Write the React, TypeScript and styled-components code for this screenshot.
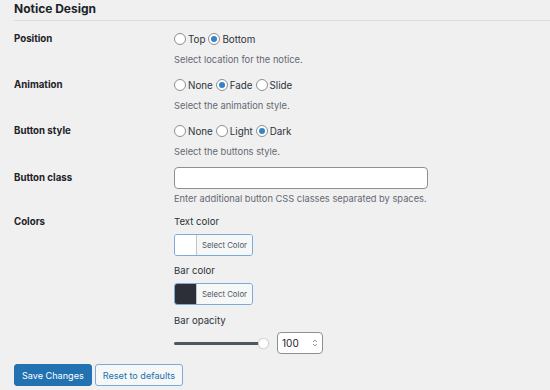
import React from "react";
import styled, { createGlobalStyle } from "styled-components";

const Global = createGlobalStyle`
  html, body { margin: 0; padding: 0; background: #f0f0f1; }
  body { font-family: Inter, "Noto Sans", sans-serif; color: #1d2327; }
  * { box-sizing: border-box; }
`;

const Page = styled.div`
  width: 550px;
  height: 390px;
  overflow: hidden;
  padding-left: 14px;
`;

const Title = styled.h2`
  margin: 0;
  font-size: 12px;
  line-height: 18px;
  font-weight: 700;
  padding-bottom: 2px;
  border-bottom: 1px solid #dcdcde;
  color: #1d2327;
`;

const Form = styled.div`
  display: flex;
  flex-direction: column;
  gap: 8px;
  padding-top: 8px;
`;

const Row = styled.div`
  display: grid;
  grid-template-columns: 160px 1fr;
`;

const Label = styled.div<{ $lh: number }>`
  font-size: 9.7px;
  font-weight: 700;
  line-height: ${(p) => p.$lh}px;
  color: #1d2327;
`;

const Field = styled.div`
  display: flex;
  flex-direction: column;
  align-items: flex-start;
`;

const RadioLine = styled.div`
  display: flex;
  align-items: center;
  height: 20px;
`;

const RadioItem = styled.label`
  display: inline-flex;
  align-items: center;
  margin-right: 3px;
  font-size: 9.8px;
  color: #2c3338;
`;

const Circle = styled.span<{ $checked?: boolean }>`
  width: 12px;
  height: 12px;
  border-radius: 50%;
  border: 1px solid #8c8f94;
  background: #fff;
  margin-right: 2px;
  display: inline-flex;
  align-items: center;
  justify-content: center;
  &::after {
    content: "";
    width: 6px;
    height: 6px;
    border-radius: 50%;
    background: ${(p) => (p.$checked ? "#3582c4" : "transparent")};
  }
`;

const Desc = styled.div<{ $mt: number }>`
  margin-top: ${(p) => p.$mt}px;
  font-size: 9.3px;
  line-height: 14px;
  color: #646970;
`;

const TextInput = styled.div`
  width: 254px;
  height: 22px;
  background: #fff;
  border: 1px solid #8c8f94;
  border-radius: 4px;
`;

const SubLabel = styled.div<{ $mt?: number }>`
  margin-top: ${(p) => p.$mt ?? 0}px;
  font-size: 9.6px;
  line-height: 16px;
  color: #2c3338;
`;

const ColorButton = styled.div`
  margin-top: 4px;
  display: flex;
  width: 79px;
  height: 22px;
  border: 1px solid #7ea9d8;
  border-radius: 3px;
  overflow: hidden;
`;

const Swatch = styled.span<{ $color: string }>`
  width: 22px;
  background: ${(p) => p.$color};
  border-right: 1px solid #c3c4c7;
`;

const SwatchText = styled.span`
  flex: 1;
  display: flex;
  align-items: center;
  justify-content: center;
  background: #f6f7f7;
  font-size: 7.8px;
  color: #50575e;
`;

const SliderRow = styled.div`
  margin-top: 3px;
  display: flex;
  align-items: center;
  height: 22px;
`;

const Range = styled.input`
  -webkit-appearance: none;
  appearance: none;
  width: 95px;
  height: 12px;
  margin: 0 8px 0 0;
  background: transparent;
  &::-webkit-slider-runnable-track {
    height: 3px;
    background: #50575e;
    border-radius: 2px;
  }
  &::-webkit-slider-thumb {
    -webkit-appearance: none;
    width: 11px;
    height: 11px;
    margin-top: -4px;
    border-radius: 50%;
    background: #fff;
    border: 1px solid #dcdcde;
    box-shadow: 0 0 1px rgba(0, 0, 0, 0.2);
  }
`;

const NumberBox = styled.div`
  width: 46px;
  height: 22px;
  display: flex;
  align-items: center;
  justify-content: space-between;
  padding: 0 4px 0 4px;
  background: #fff;
  border: 1px solid #8c8f94;
  border-radius: 4px;
  font-size: 10px;
  color: #1d2327;
`;

const Actions = styled.div`
  margin-top: 10px;
  display: flex;
  gap: 3px;
`;

const Button = styled.button<{ $primary?: boolean }>`
  height: 22px;
  padding: 0 7px;
  border-radius: 3px;
  font-family: Inter, "Noto Sans", sans-serif;
  font-size: 9.1px;
  border: 1px solid ${(p) => (p.$primary ? "#2271b1" : "#7ea9d8")};
  background: ${(p) => (p.$primary ? "#2271b1" : "#f6f7f7")};
  color: ${(p) => (p.$primary ? "#fff" : "#2271b1")};
`;

type Opt = { label: string; checked?: boolean };

function Radios({ opts }: { opts: Opt[] }) {
  return (
    <RadioLine>
      {opts.map((o) => (
        <RadioItem key={o.label}>
          <Circle $checked={o.checked} />
          {o.label}
        </RadioItem>
      ))}
    </RadioLine>
  );
}

export default function App() {
  return (
    <Page>
      <Global />
      <Title>Notice Design</Title>
      <Form>
        <Row>
          <Label $lh={20}>Position</Label>
          <Field>
            <Radios opts={[{ label: "Top" }, { label: "Bottom", checked: true }]} />
            <Desc $mt={4}>Select location for the notice.</Desc>
          </Field>
        </Row>
        <Row>
          <Label $lh={20}>Animation</Label>
          <Field>
            <Radios
              opts={[{ label: "None" }, { label: "Fade", checked: true }, { label: "Slide" }]}
            />
            <Desc $mt={4}>Select the animation style.</Desc>
          </Field>
        </Row>
        <Row>
          <Label $lh={20}>Button style</Label>
          <Field>
            <Radios
              opts={[{ label: "None" }, { label: "Light" }, { label: "Dark", checked: true }]}
            />
            <Desc $mt={4}>Select the buttons style.</Desc>
          </Field>
        </Row>
        <Row>
          <Label $lh={22}>Button class</Label>
          <Field>
            <TextInput />
            <Desc $mt={3}>Enter additional button CSS classes separated by spaces.</Desc>
          </Field>
        </Row>
        <Row>
          <Label $lh={16}>Colors</Label>
          <Field>
            <SubLabel>Text color</SubLabel>
            <ColorButton>
              <Swatch $color="#ffffff" />
              <SwatchText>Select Color</SwatchText>
            </ColorButton>
            <SubLabel $mt={7}>Bar color</SubLabel>
            <ColorButton>
              <Swatch $color="#2c2f38" />
              <SwatchText>Select Color</SwatchText>
            </ColorButton>
            <SubLabel $mt={8}>Bar opacity</SubLabel>
            <SliderRow>
              <Range type="range" min={0} max={100} defaultValue={100} readOnly />
              <NumberBox>
                <span>100</span>
                <svg width="6" height="10" viewBox="0 0 6 10">
                  <path d="M1 4 L3 2 L5 4" fill="none" stroke="#8c8f94" strokeWidth="0.9" />
                  <path d="M1 6 L3 8 L5 6" fill="none" stroke="#8c8f94" strokeWidth="0.9" />
                </svg>
              </NumberBox>
            </SliderRow>
          </Field>
        </Row>
      </Form>
      <Actions>
        <Button $primary>Save Changes</Button>
        <Button>Reset to defaults</Button>
      </Actions>
    </Page>
  );
}
